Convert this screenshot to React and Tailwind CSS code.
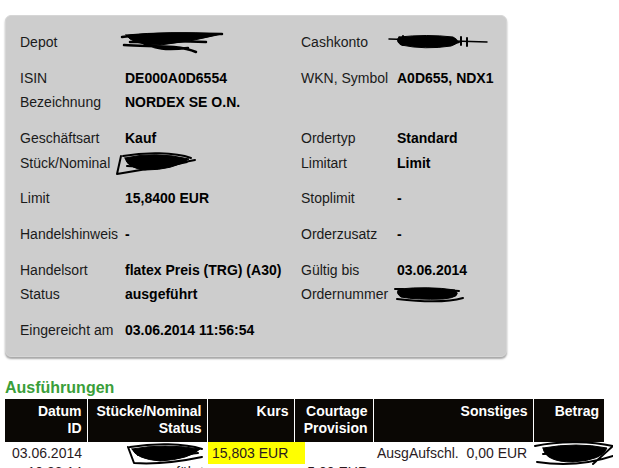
import React from "react";

// hand-drawn redaction marks over private numbers
function Scribble({ w, h, className = "", children }) {
  return (
    <svg
      width={w}
      height={h}
      viewBox={`0 0 ${w} ${h}`}
      className={"block shrink-0 " + className}
      fill="none"
      stroke="#000"
      strokeLinecap="round"
      strokeLinejoin="round"
    >
      {children}
    </svg>
  );
}

function Row({ l1, v1, l2, v2 }) {
  return (
    <div className="grid h-6 grid-cols-[105px_176px_96px_1fr] items-center whitespace-nowrap">
      <span>{l1}</span>
      <span className="font-bold text-black">{v1}</span>
      <span>{l2}</span>
      <span className="font-bold text-black">{v2}</span>
    </div>
  );
}

export default function App() {
  return (
    <div className="min-h-[468px] overflow-hidden bg-white pl-[5px] pt-[15px] font-['Liberation_Sans',Arial,sans-serif] text-[14px] text-[#1a1a1a]">
      <div className="w-[502px] rounded-[6px] border border-[#d6d6d6] bg-[#cdcdcd] px-[14px] pb-[14px] pt-[14px] shadow-[0_2px_2px_rgba(0,0,0,0.35)]">
        <div className="flex flex-col gap-3">
          <Row
            l1="Depot"
            v1={
              <Scribble w={108} h={25} className="-ml-[7px]">
                <path d="M8 5 Q50 1 104 4 Q72 12 42 15 Q14 15 8 5Z" fill="#000" strokeWidth="1" />
                <path d="M4 7 C30 3 70 3 104 4 M12 12 C40 11 70 11 88 12 M6 15 C30 17 60 14 78 22 M20 10 C36 20 50 20 70 18" strokeWidth="2.5" />
              </Scribble>
            }
            l2="Cashkonto"
            v2={
              <Scribble w={102} h={19} className="-ml-[10px]">
                <path d="M2 6 L100 9" strokeWidth="1.5" />
                <path d="M12 4 Q40 1 66 4 Q76 9 64 13 Q38 17 14 12 Q8 8 12 4Z" fill="#000" strokeWidth="1" />
                <path d="M16 3 L16 12 M74 4 L74 12 M80 5 L80 13 M22 10 C40 14 60 13 72 9" strokeWidth="2" />
              </Scribble>
            }
          />
          <div>
            <Row l1="ISIN" v1="DE000A0D6554" l2="WKN, Symbol" v2="A0D655, NDX1" />
            <Row l1="Bezeichnung" v1="NORDEX SE O.N." />
          </div>
          <div>
            <Row l1="Geschäftsart" v1="Kauf" l2="Ordertyp" v2="Standard" />
            <Row
              l1="Stück/Nominal"
              v1={
                <Scribble w={82} h={26} className="-ml-[10px]">
                  <path d="M10 8 Q40 1 74 9 Q58 20 30 20 Q12 18 10 8Z" fill="#000" strokeWidth="1" />
                  <path d="M6 6 L2 24 Q40 18 80 10 M8 6 C30 2 60 2 76 8 M12 16 C36 18 56 16 72 12" strokeWidth="2" />
                </Scribble>
              }
              l2="Limitart"
              v2="Limit"
            />
          </div>
          <Row l1="Limit" v1="15,8400 EUR" l2="Stoplimit" v2="-" />
          <Row l1="Handelshinweis" v1="-" l2="Orderzusatz" v2="-" />
          <div>
            <Row l1="Handelsort" v1="flatex Preis (TRG) (A30)" l2="Gültig bis" v2="03.06.2014" />
            <Row
              l1="Status"
              v1="ausgeführt"
              l2="Ordernummer"
              v2={
                <Scribble w={72} h={18} className="-ml-[4px]">
                  <path d="M6 4 Q36 1 62 5 Q70 12 50 14 Q24 15 8 12 Q2 8 6 4Z" fill="#000" strokeWidth="1" />
                  <path d="M2 4 L10 4 M4 14 C30 17 56 17 70 13 M40 4 L66 6" strokeWidth="2" />
                </Scribble>
              }
            />
          </div>
          <div className="grid h-6 grid-cols-[105px_1fr] items-center">
            <span>Eingereicht am</span>
            <span className="font-bold text-black">03.06.2014 11:56:54</span>
          </div>
        </div>
      </div>

      <h2 className="mt-[21px] text-[16px] font-bold leading-[20px] text-[#3a9e3a]">Ausführungen</h2>

      <table className="mt-[1px] w-[599px] table-fixed border-collapse leading-[17px]">
        <colgroup>
          <col className="w-[82px]" />
          <col className="w-[120px]" />
          <col className="w-[87px]" />
          <col className="w-[79px]" />
          <col className="w-[160px]" />
          <col className="w-[71px]" />
        </colgroup>
        <thead>
          <tr className="bg-[#0a0704] text-right align-top font-bold text-white">
            <th className="border-r border-white pb-[5px] pr-[5px] pt-[4px]">Datum<br />ID</th>
            <th className="border-r border-white pb-[5px] pr-[5px] pt-[4px]">Stücke/Nominal<br />Status</th>
            <th className="border-r border-white pb-[5px] pr-[5px] pt-[4px]">Kurs</th>
            <th className="border-r border-white pb-[5px] pr-[5px] pt-[4px]">Courtage<br />Provision</th>
            <th className="border-r border-white pb-[5px] pr-[5px] pt-[4px]">Sonstiges</th>
            <th className="pb-[5px] pr-[5px] pt-[4px]">Betrag</th>
          </tr>
        </thead>
        <tbody className="text-[#2a1a1e]">
          <tr className="align-top">
            <td className="pr-[5px] text-right">
              <div className="leading-[22px]">03.06.2014</div>
              <div>10:33:14</div>
            </td>
            <td className="pr-[3px] text-right">
              <div className="flex h-[22px] justify-end">
                <Scribble w={80} h={24} className="mt-[1px]">
                  <path d="M8 6 Q40 0 76 6 Q66 16 36 18 Q12 16 8 6Z" fill="#000" strokeWidth="1" />
                  <path d="M4 4 L10 20 Q40 22 78 14 M6 4 C30 0 60 0 78 6 M14 12 C36 14 56 12 74 10" strokeWidth="2" />
                </Scribble>
              </div>
              <div>ausgeführt</div>
            </td>
            <td>
              <div className="ml-px h-[22px] w-[97px] bg-[#ffff00] pl-1 leading-[22px]">15,803 EUR</div>
            </td>
            <td className="pr-[5px] text-right">
              <div className="h-[22px]" />
              <div>5,00 EUR</div>
            </td>
            <td className="pl-[4px]">
              <div className="whitespace-pre leading-[22px]">AusgAufschl.  0,00 EUR</div>
            </td>
            <td>
              <Scribble w={80} h={28} className="-mt-[2px]">
                <path d="M10 8 Q44 2 74 8 Q70 20 40 22 Q12 22 10 8Z" fill="#000" strokeWidth="1" />
                <path d="M2 6 C30 0 60 2 80 6 L60 24 M4 22 C30 26 56 24 80 16 M10 14 L70 12" strokeWidth="2" />
              </Scribble>
            </td>
          </tr>
        </tbody>
      </table>
    </div>
  );
}
